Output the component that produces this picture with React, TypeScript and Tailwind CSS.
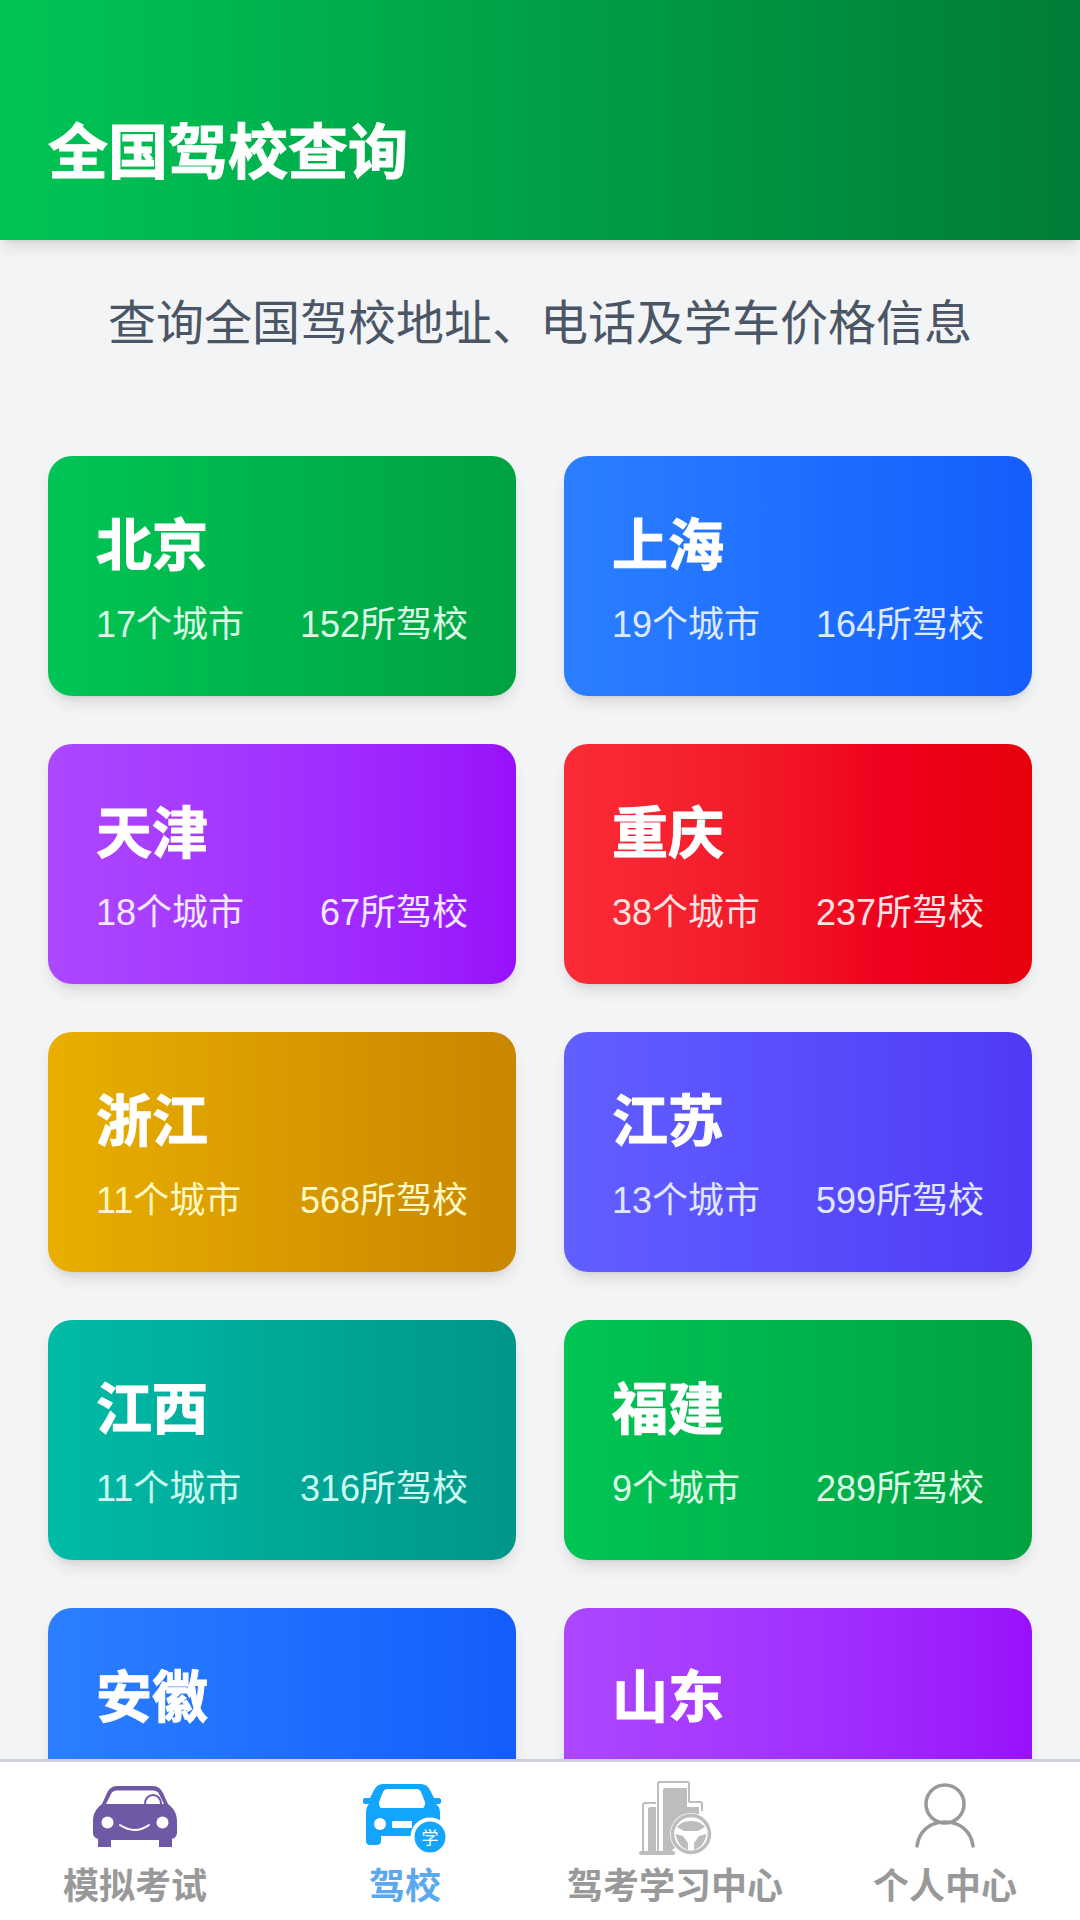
const font = { fontFamily: '"Liberation Sans", "Noto Sans CJK SC", sans-serif' };

const green = "from-[#00c555] to-[#00a240]";
const blue = "from-blue-500 to-blue-600";
const purple = "from-purple-500 to-purple-600";

const cards = [
  { name: "北京", cities: "17个城市", schools: "152所驾校", bg: green, sub: "text-green-100" },
  { name: "上海", cities: "19个城市", schools: "164所驾校", bg: blue, sub: "text-blue-100" },
  { name: "天津", cities: "18个城市", schools: "67所驾校", bg: purple, sub: "text-purple-100" },
  { name: "重庆", cities: "38个城市", schools: "237所驾校", bg: "from-red-500 to-red-600", sub: "text-red-100" },
  { name: "浙江", cities: "11个城市", schools: "568所驾校", bg: "from-[#e8af00] to-[#c98600]", sub: "text-yellow-100" },
  { name: "江苏", cities: "13个城市", schools: "599所驾校", bg: "from-indigo-500 to-indigo-600", sub: "text-indigo-100" },
  { name: "江西", cities: "11个城市", schools: "316所驾校", bg: "from-teal-500 to-teal-600", sub: "text-teal-100" },
  { name: "福建", cities: "9个城市", schools: "289所驾校", bg: green, sub: "text-green-100" },
  { name: "安徽", cities: "", schools: "", bg: blue, sub: "text-blue-100" },
  { name: "山东", cities: "", schools: "", bg: purple, sub: "text-purple-100" },
];

const MockCar = () => (
  <svg width="84" height="62" viewBox="0 0 84 62" className="mt-[12px]">
    <path d="M5 50H79V61H66V54H18V61H5Z" fill="#6f58a5" />
    <path d="M0 35C0 26 5 21 9 18L14 7C16 3 19 0 24 0H60C65 0 68 3 70 7L75 18C79 21 84 26 84 35V47C84 50 81 53 78 53H6C3 53 0 50 0 47Z" fill="#6f58a5" />
    <path d="M13 18L18 8C19 6 21 4.500 24 4.500H60C63 4.500 65 6 66 8L71 18Z" fill="#fff" />
    <path d="M52 18C52 12 56 9 60 9C64 9 68 12 68 18" fill="none" stroke="#6f58a5" strokeWidth="2" />
    <circle cx="14.500" cy="36.500" r="6" fill="#fff" />
    <circle cx="69.500" cy="36.500" r="6" fill="#fff" />
    <path d="M27 39Q42 49 56 39" fill="none" stroke="#fff" strokeWidth="2" strokeLinecap="round" />
  </svg>
);

const SchoolCar = () => (
  <svg width="84" height="70" viewBox="0 0 84 70" className="mt-[16px]">
    <path d="M7 14L11 6C13 2 16 0 20 0H58C62 0 65 2 67 6L71 14H76C79 14 79 20 76 20H73C76 22 77 25 77 29V50C77 57 74 61 70 61H60V52H18V57C18 60 16 61 13 61H7C4 61 3 59 3 57V29C3 25 4 22 6 20H2C-1 20 -1 14 2 14Z" fill="#12a5fb" />
    <path d="M16 18L20 8C21 6 22 5 25 5H53C56 5 57 6 58 8L62 18C62.500 20 61 24 60 24H18C17 24 15.500 20 16 18Z" fill="#fff" />
    <circle cx="17" cy="40" r="6" fill="#fff" />
    <rect x="29" y="37" width="20" height="7" rx="1" fill="#fff" />
    <circle cx="67" cy="53" r="19.500" fill="#fff" />
    <circle cx="67" cy="53" r="15.500" fill="#12a5fb" />
    <text x="67" y="59.500" textAnchor="middle" fontSize="17" fill="#fff" style={font}>学</text>
  </svg>
);

const StudyIcon = () => (
  <svg width="74" height="74" viewBox="0 0 74 74" className="mt-[14px] ml-[2px]">
    <path d="M19 72V3C19 1.500 20 1 21 1H48C49 1 50 2 50 3V21M50 21H61C62 21 63 22 63 23V30" fill="none" stroke="#bdbdbd" strokeWidth="2" />
    <path d="M24 72V9C24 7.500 25 7 26 7H48V26H60V45L30 72Z" fill="#bdbdbd" />
    <path d="M17 22H6C5 22 4 23 4 24V71" fill="none" stroke="#bdbdbd" strokeWidth="2" />
    <path d="M9 72V28C9 27 10 26 11 26H17V72Z" fill="#bdbdbd" />
    <rect x="0" y="70" width="36" height="4" rx="2" fill="#bdbdbd" />
    <circle cx="52" cy="53" r="21" fill="#fff" />
    <circle cx="52" cy="53" r="18.500" fill="none" stroke="#bdbdbd" strokeWidth="3.500" />
    <path d="M38 46C41 42 46 40 52 40C58 40 63 42 66 46L59 50H45Z" fill="#bdbdbd" />
    <path d="M36.500 53L44 55L49 62V69C42 67 38 61 36.500 53Z" fill="#bdbdbd" />
    <path d="M67.500 53L60 55L55 62V69C62 67 66 61 67.500 53Z" fill="#bdbdbd" />
  </svg>
);

const PersonIcon = () => (
  <svg width="60" height="68" viewBox="0 0 60 68" className="mt-[8px]">
    <circle cx="30" cy="23" r="19" fill="none" stroke="#999" strokeWidth="3.500" />
    <path d="M2 65C4 50 15 41 30 41C45 41 56 50 58 65" fill="none" stroke="#999" strokeWidth="3.500" strokeLinecap="round" />
  </svg>
);

const tabs = [
  { label: "模拟考试", icon: <MockCar />, active: false },
  { label: "驾校", icon: <SchoolCar />, active: true },
  { label: "驾考学习中心", icon: <StudyIcon />, active: false },
  { label: "个人中心", icon: <PersonIcon />, active: false },
];

export default function App() {
  return (
    <div className="h-[1920px] overflow-hidden bg-gray-100" style={font}>
      <header className="h-60 flex items-end px-12 pb-[41px] bg-gradient-to-r from-[#00c555] to-[#007d38] shadow-lg">
        <h1 className="text-[60px] leading-[90px] font-bold text-white [-webkit-text-stroke:1px_white]">全国驾校查询</h1>
      </header>

      <p className="pt-12 pb-12 text-center text-[48px] leading-[72px] text-gray-600">查询全国驾校地址、电话及学车价格信息</p>

      <main className="grid grid-cols-2 gap-12 px-12 pt-12">
        {cards.map((c) => (
          <div key={c.name} className={`h-60 p-12 rounded-3xl shadow-lg bg-gradient-to-r ${c.bg}`}>
            <h2 className="text-[56px] leading-[84px] font-bold text-white [-webkit-text-stroke:1px_white]">{c.name}</h2>
            <div className={`flex justify-between text-[36px] leading-[54px] mt-[10px] ${c.sub}`}>
              <span>{c.cities}</span>
              <span>{c.schools}</span>
            </div>
          </div>
        ))}
      </main>

      <nav className="fixed bottom-0 left-0 w-[1080px] h-[161px] grid grid-cols-4 bg-white border-t-[3px] border-[#ccd0d8]">
        {tabs.map((t) => (
          <div key={t.label} className="flex flex-col items-center">
            <div className="h-[98px] flex items-center justify-center">{t.icon}</div>
            <span className={`text-[36px] leading-[54px] font-bold ${t.active ? "text-[#5aa9f0]" : "text-[#999999]"}`}>{t.label}</span>
          </div>
        ))}
      </nav>
    </div>
  );
}
